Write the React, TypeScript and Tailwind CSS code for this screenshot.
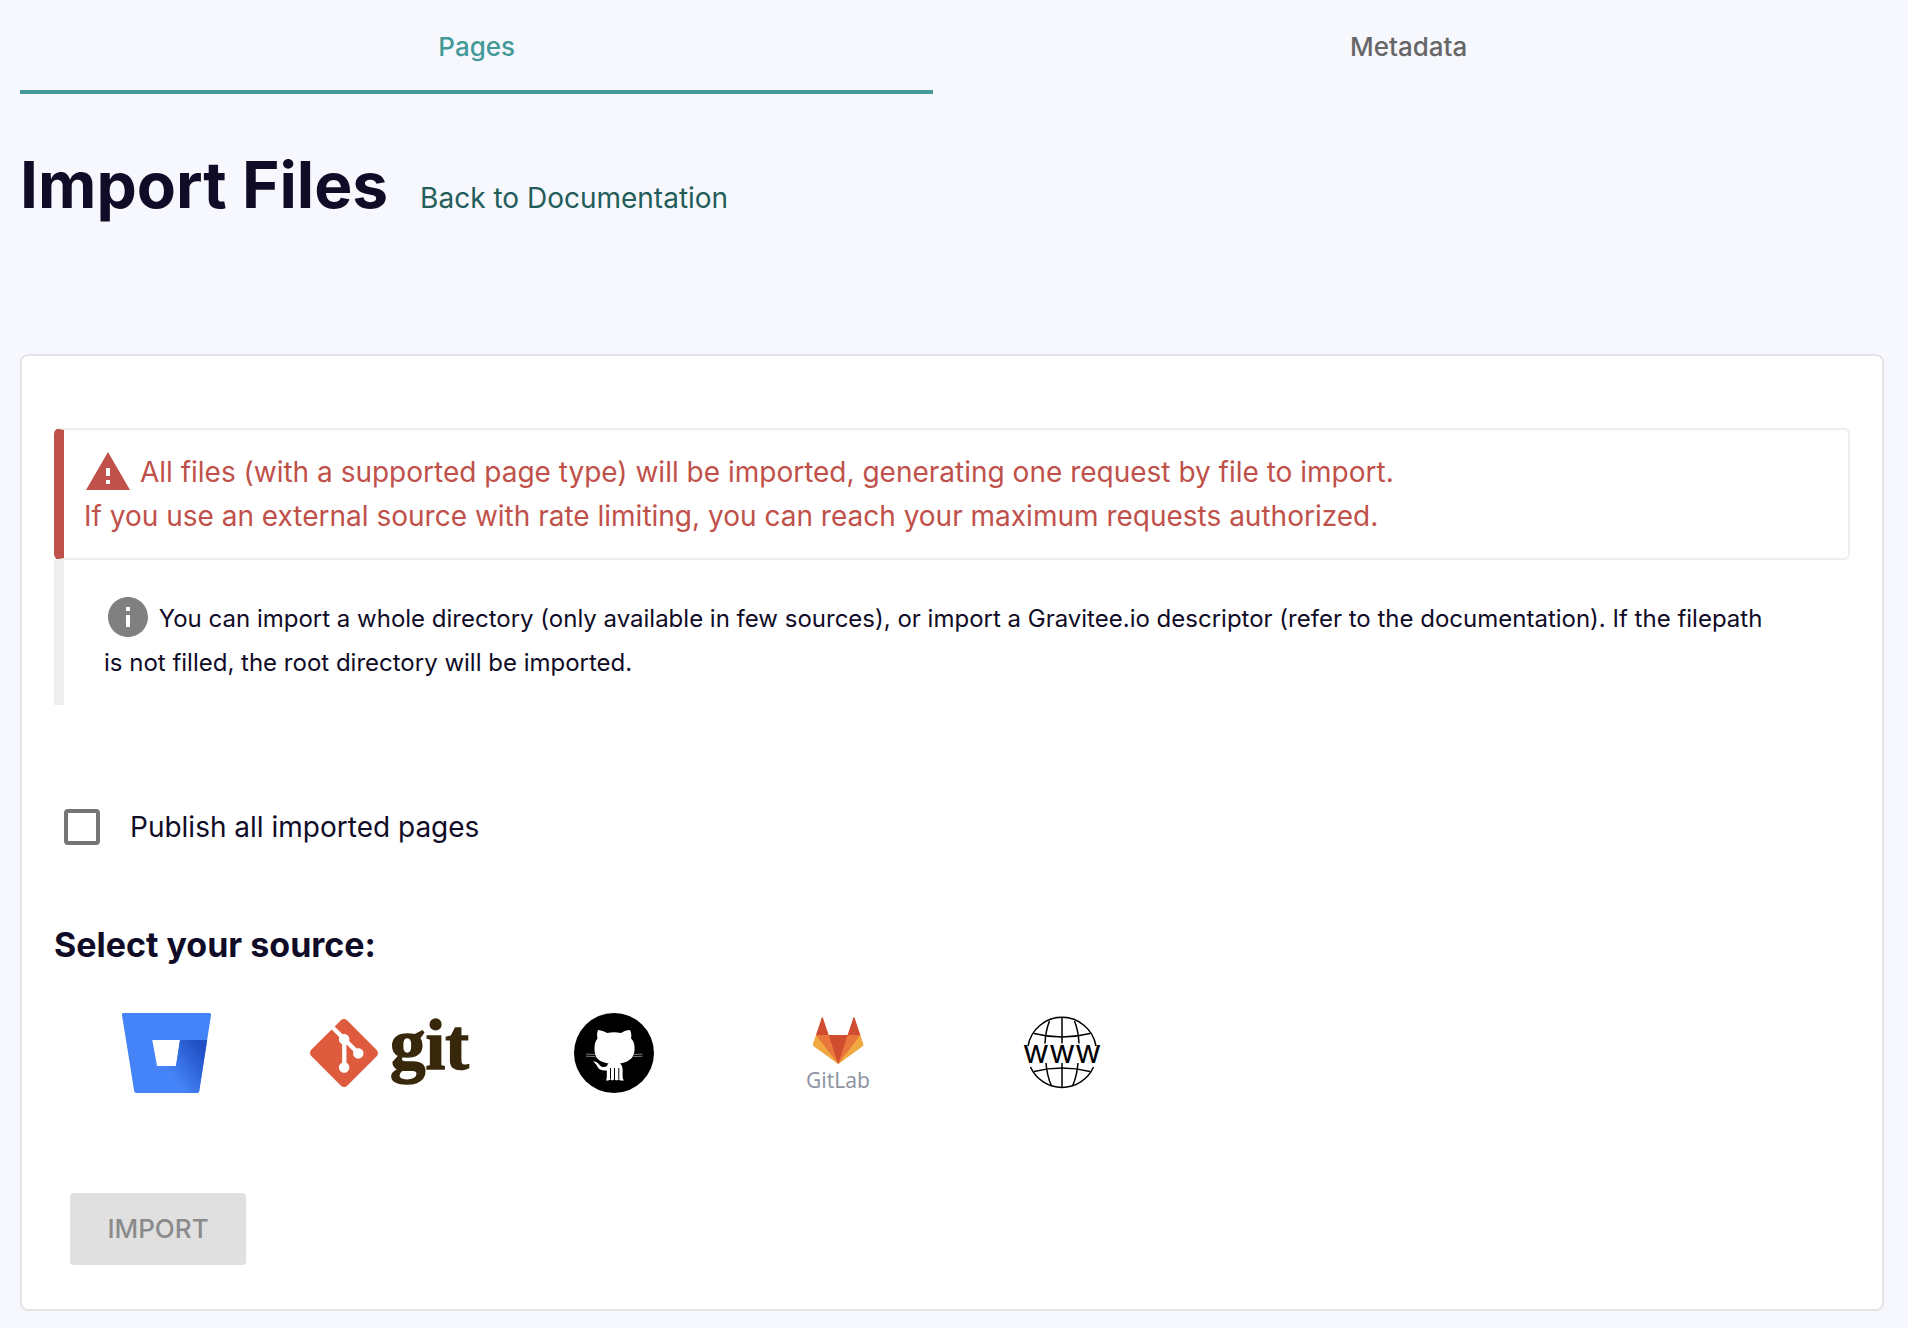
import { useState, type ReactNode } from "react";
import { MdInfo, MdWarning } from "react-icons/md";
import { SiGit } from "react-icons/si";

function BitbucketLogo() {
  return (
    <svg viewBox="0 0 89 80" className="h-20" aria-hidden="true">
      <defs>
        <linearGradient id="bucket" gradientUnits="userSpaceOnUse" x1="87" y1="34" x2="50" y2="62">
          <stop offset="0.15" stopColor="#2150c5" />
          <stop offset="1" stopColor="#4484f8" />
        </linearGradient>
      </defs>
      <path
        fill="#4484f8"
        fillRule="evenodd"
        d="M1.600 0H87.400C88.600 0 89.200 1 89 2.200L77.200 78C77 79.200 76.200 80 75 80H14.600C13.200 80 12.400 79.200 12.200 78L0 2.200C-.200 1 .400 0 1.600 0ZM30.300 27L35 53H54L58 27Z"
      />
      <path fill="url(#bucket)" d="M58 27H85.200L77.200 78C77 79.200 76.200 80 75 80H62L36 53H54Z" />
    </svg>
  );
}

function GitLogo() {
  return (
    <span className="flex h-20 items-center gap-3">
      <SiGit size={68} color="#de5b3e" aria-hidden="true" />
      <svg viewBox="0 0 80 80" className="h-20 overflow-visible" aria-hidden="true">
        <text
          x="0"
          y="56"
          fontFamily="Liberation Serif, serif"
          fontWeight="700"
          fontSize="71"
          fill="#38280b"
          stroke="#38280b"
          strokeWidth="1.500"
        >
          git
        </text>
      </svg>
    </span>
  );
}

function GitHubLogo() {
  return (
    <svg viewBox="0 0 80 80" className="h-20" aria-hidden="true">
      <circle cx="40" cy="40" r="40" />
      <path
        fill="#fff"
        d="M24 17C28 17.500 31 18.800 33 20C38 19 42 19 47 20C50 18 53 17 56 17C57.500 20 57.600 23 57 25.500C60 28 60.600 32 60.600 36C60.600 44 56 49 46 50.500C48 52 48.600 54 48.600 57V64C48.600 66 49.600 66.500 50 67.500H46C45.300 67 45.200 66 45 65.500C44.800 67 43.500 67.500 42 67.300C41.300 67 40.800 66.500 40.500 65.500C40.200 66.800 39 67.500 37.500 67.300C36.800 67 36.500 66.500 36.300 65.500C36.200 67 35.500 67.500 32 67.500C32.500 66 32.800 65 32.800 64V57.500C28 58 25 57 23 53C22 51 20.500 49.500 18.700 48.500C22 48 24.500 50 26 52.500C28 54.500 31 54.500 33 53C33.300 52 34 51 34.500 50.500C25 49 20.500 45 20.500 36C20.500 32 21 28 23.500 25.500C22.800 22 23 19.500 24 17Z"
      />
      <path stroke="#000" strokeWidth="1" fill="none" d="M36.500 55V66M40.500 55V66M44.800 55V66" />
      <path
        stroke="#999"
        strokeWidth="0.800"
        fill="none"
        d="M12 41L21 41.500M12 43.200L21.500 43.600M68.500 41L60 41.500M68.500 43.200L59.500 43.600"
      />
    </svg>
  );
}

function GitLabLogo() {
  return (
    <svg viewBox="0 0 80 80" className="h-20" aria-hidden="true">
      <g transform="translate(15 4)">
        <path fill="#f0a840" d="M3 18L0 27Q-.300 28.500 1 29.500L25.200 47L49.400 29.500Q50.700 28.500 50.400 27L47.300 18Z" />
        <path fill="#e9763a" d="M3 18H47.300L25.200 47Z" />
        <path
          fill="#d14d2f"
          d="M15.700 18H34.600L25.200 47ZM3 18L8.700 .800Q9.300-.600 9.900 .800L15.700 18ZM34.600 18L40.400 .800Q41-.600 41.600 .800L47.300 18Z"
        />
      </g>
      <text x="40" y="75" textAnchor="middle" fontFamily="Noto Sans, sans-serif" fontSize="21" fill="#9095a3">
        GitLab
      </text>
    </svg>
  );
}

function WebLogo() {
  return (
    <svg viewBox="0 0 80 80" className="h-20 overflow-visible" aria-hidden="true">
      <g fill="none" stroke="#000" strokeWidth="1.500">
        <path d="M6 33A34.500 34.500 0 0 1 74 33M8.500 54A34.500 34.500 0 0 0 71.500 54" />
        <path d="M40 5V30.500M40 50V75M27.500 8Q23.500 18 23 30.500M52.500 8Q56.500 18 57 30.500M24 50Q25 63 29.500 73M56 50Q55 63 50.500 73" />
        <path d="M12 20.500Q40 27.500 68 20.500M12 58.500Q40 51.500 68 58.500" />
      </g>
      <text x="40" y="50" textAnchor="middle" fontFamily="Inter, sans-serif" fontSize="32">
        www
      </text>
    </svg>
  );
}

const sources: { name: string; logo: ReactNode }[] = [
  { name: "Bitbucket", logo: <BitbucketLogo /> },
  { name: "Git", logo: <GitLogo /> },
  { name: "GitHub", logo: <GitHubLogo /> },
  { name: "GitLab", logo: <GitLabLogo /> },
  { name: "HTTP", logo: <WebLogo /> },
];

export default function App() {
  const [publish, setPublish] = useState(false);

  return (
    <div className="min-h-screen bg-[#f7f8fd] pr-6 pb-4 pl-5 font-[Inter,sans-serif] text-[28px] leading-[44px] text-[#100c27]">
      <nav className="flex text-[26px] font-medium" role="tablist">
        <button
          role="tab"
          aria-selected="true"
          className="h-[94px] w-[49%] border-b-4 border-[#439a98] pt-1 text-[#439a98]"
        >
          Pages
        </button>
        <button role="tab" aria-selected="false" className="h-[94px] flex-1 border-b-4 border-transparent pt-1 text-[#666667]">
          Metadata
        </button>
      </nav>

      <header className="mt-[51px] flex items-baseline gap-8">
        <h1 className="text-[64px] leading-[80px] font-bold">Import Files</h1>
        <a href="#documentation" className="text-[#235d5a]">
          Back to Documentation
        </a>
      </header>

      <main className="mt-[129px] rounded-lg border-2 border-[#e3e4e8] bg-white px-8 pt-[72px] pb-11">
        <p className="rounded-md border-2 border-l-[10px] border-[#eeeeee] border-l-[#bf514a] p-5 text-[#bf514a]">
          <MdWarning size={48} className="-mt-2 -mb-1 inline-block align-middle" aria-hidden="true" /> All files (with a
          supported page type) will be imported, generating one request by file to import.
          <br />
          If you use an external source with rate limiting, you can reach your maximum requests authorized.
        </p>
        <p className="border-l-[10px] border-[#eeeeee] pt-[37px] pr-[72px] pb-5 pl-10 text-[24px]">
          <MdInfo size={48} className="-mt-2.5 -mb-1 inline-block align-middle text-[#808080]" aria-hidden="true" /> You can
          import a whole directory (only available in few sources), or import a Gravitee.io descriptor (refer to the
          documentation). If the filepath is not filled, the root directory will be imported.
        </p>

        <label className="mt-[100px] ml-2.5 flex w-fit items-center gap-[30px]">
          <input
            type="checkbox"
            checked={publish}
            onChange={(e) => setPublish(e.target.checked)}
            className="size-9 appearance-none rounded-sm border-4 border-[#757575] checked:bg-[#757575]"
          />
          Publish all imported pages
        </label>

        <h2 className="mt-[74px] text-[34px] font-bold">Select your source:</h2>
        <div className="mt-[46px] flex flex-wrap">
          {sources.map((s) => (
            <button key={s.name} aria-label={s.name} className="flex w-56 justify-center">
              {s.logo}
            </button>
          ))}
        </div>

        <button disabled className="mt-[100px] ml-4 block h-[72px] w-44 rounded-sm bg-[#e0e0e0] text-[26px] font-medium text-[#8b8b8b]">
          IMPORT
        </button>
      </main>
    </div>
  );
}
